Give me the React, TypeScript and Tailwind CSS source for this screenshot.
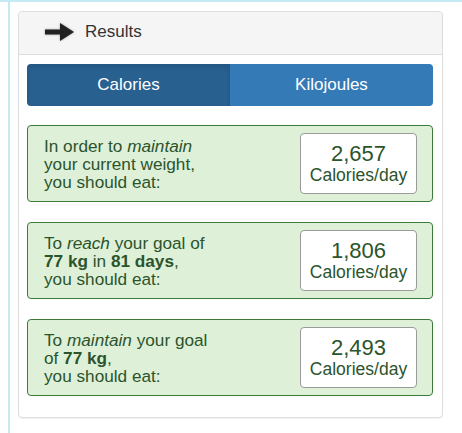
import React from "react";

const textGreen = "text-[#2b542c]";

function ResultCard({ children, value }: { children: React.ReactNode; value: string }) {
  return (
    <div className="flex items-center justify-between rounded-[4px] border border-[#3d7a3a] bg-[#dff0d8] pl-[16px] pr-[15px] py-[7px]">
      <div className={`text-[17.2px] leading-[18px] ${textGreen}`}>{children}</div>
      <div className={`flex h-[61px] w-[117px] flex-col items-center justify-center rounded-[4px] border border-[#9a9a9a] bg-white ${textGreen}`}>
        <div className="text-[22px] leading-[24px]">{value}</div>
        <div className="text-[17.5px] leading-[19px]">Calories/day</div>
      </div>
    </div>
  );
}

export default function App() {
  return (
    <div
      className="min-h-[433px] w-[462px] border-t-2 border-[#c6eaf3] bg-white"
      style={{ fontFamily: '"Liberation Sans", Arial, sans-serif' }}
    >
      <div className="ml-[8px] min-h-[431px] border-l-2 border-[#c6eaf3] pl-[8px] pt-[9px]">
        <div className="w-[425px] rounded-[4px] border border-[#dddddd] shadow-[0_1px_1px_rgba(0,0,0,0.05)]">
          <div className="flex h-[43px] items-center gap-[10px] rounded-t-[4px] border-b border-[#dddddd] bg-[#f5f5f5] pb-[3px] pl-[25px]">
            <svg width="31" height="18" viewBox="0 0 31 18" className="drop-shadow-[0_0_1px_rgba(0,0,0,0.35)]">
              <rect x="1" y="6.5" width="17" height="5" fill="#222" />
              <polygon points="16,0 30,9 16,18" fill="#222" />
            </svg>
            <span className="text-[17px] text-[#333]">Results</span>
          </div>
          <div className="pl-[8px] pr-[9px] pb-[21px] pt-[9px]">
            <div className="flex h-[42px] overflow-hidden rounded-[4px] text-[17px] text-white">
              <div className="flex flex-1 items-center justify-center bg-[#286090] shadow-[inset_0_3px_5px_rgba(0,0,0,0.125)]">
                Calories
              </div>
              <div className="flex flex-1 items-center justify-center bg-[#337ab7]">Kilojoules</div>
            </div>
            <div className="mt-[19px] flex flex-col gap-[20px]">
              <ResultCard value="2,657">
                In order to <i>maintain</i>
                <br />
                your current weight,
                <br />
                you should eat:
              </ResultCard>
              <ResultCard value="1,806">
                To <i>reach</i> your goal of
                <br />
                <b>77 kg</b> in <b>81 days</b>,
                <br />
                you should eat:
              </ResultCard>
              <ResultCard value="2,493">
                To <i>maintain</i> your goal
                <br />
                of <b>77 kg</b>,
                <br />
                you should eat:
              </ResultCard>
            </div>
          </div>
        </div>
      </div>
    </div>
  );
}
